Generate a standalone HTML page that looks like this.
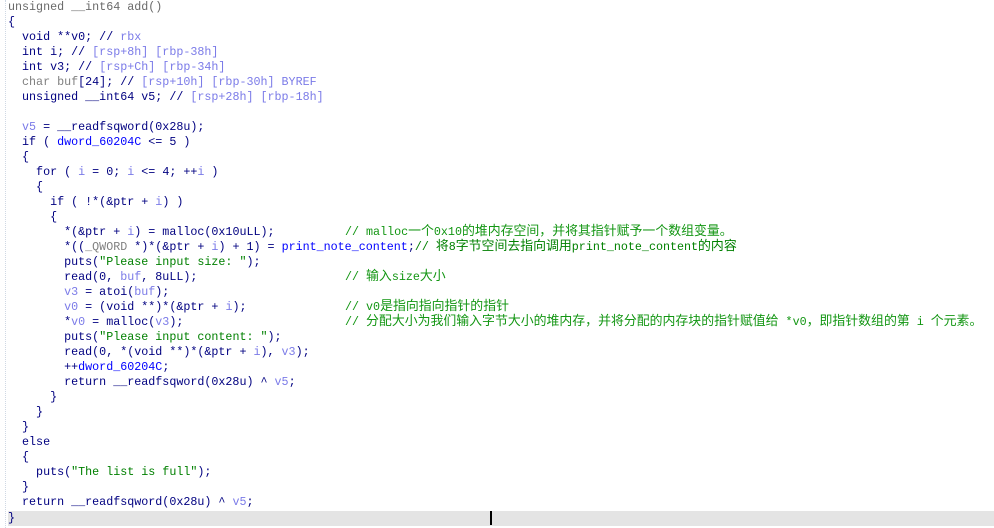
<!DOCTYPE html>
<html><head><meta charset="utf-8"><style>
body{margin:0;background:#fff;width:994px;height:528px;overflow:hidden;position:relative}
.g{position:absolute;left:0;top:0;width:5px;height:528px;border-right:1px dotted #cfd8e4}
.c{position:absolute;left:8px;top:0;font-family:"Liberation Mono","Noto Sans CJK SC",monospace;font-size:11.7px;color:#000080;}
.l{height:15px;line-height:15px;white-space:pre;position:relative}
.v{color:#7b7be8}.s{color:#008000}.b{color:#0000ff}.r{color:#808080}
.m{position:absolute;left:337px;top:0;color:#139613}
.k{font-family:"Noto Sans CJK SC",sans-serif;font-size:12.9px;line-height:0}
.hl{position:absolute;left:8px;top:511px;width:986px;height:15px;background:#e4e4e4}
.cur{position:absolute;left:490px;top:511px;width:2px;height:14px;background:#000}
</style></head><body>
<div class="g"></div>
<div class="hl"></div><div class="cur"></div>
<div class="c">
<div class="l" style="color:#6a6a6a">unsigned __int64 add()</div>
<div class="l">{</div>
<div class="l">  void **v0; // <span class="v">rbx</span></div>
<div class="l">  int i; // <span class="v">[rsp+8h] [rbp-38h]</span></div>
<div class="l">  int v3; // <span class="v">[rsp+Ch] [rbp-34h]</span></div>
<div class="l"><span class="r">  char buf</span>[24]; // <span class="v">[rsp+10h] [rbp-30h] BYREF</span></div>
<div class="l">  unsigned __int64 v5; // <span class="v">[rsp+28h] [rbp-18h]</span></div>
<div class="l"> </div>
<div class="l">  <span class="v">v5</span> = __readfsqword(0x28u);</div>
<div class="l">  if ( <span class="b">dword_60204C</span> &lt;= 5 )</div>
<div class="l">  {</div>
<div class="l">    for ( <span class="v">i</span> = 0; <span class="v">i</span> &lt;= 4; ++<span class="v">i</span> )</div>
<div class="l">    {</div>
<div class="l">      if ( !*(&amp;ptr + <span class="v">i</span>) )</div>
<div class="l">      {</div>
<div class="l">        *(&amp;ptr + <span class="v">i</span>) = malloc(0x10uLL);<span class="m">// malloc<span class="k">一个</span>0x10<span class="k">的堆内存空间，并将其指针赋予一个数组变量。</span></span></div>
<div class="l">        *((<span class="r">_QWORD</span> *)*(&amp;ptr + <span class="v">i</span>) + 1) = <span class="b">print_note_content</span>;<span class="s">// <span class="k">将</span>8<span class="k">字节空间去指向调用</span>print_note_content<span class="k">的内容</span></span></div>
<div class="l">        puts(<span class="s">"Please input size: "</span>);</div>
<div class="l">        read(0, <span class="v">buf</span>, 8uLL);<span class="m">// <span class="k">输入</span>size<span class="k">大小</span></span></div>
<div class="l">        <span class="v">v3</span> = atoi(<span class="v">buf</span>);</div>
<div class="l">        <span class="v">v0</span> = (void **)*(&amp;ptr + <span class="v">i</span>);<span class="m">// v0<span class="k">是指向指向指针的指针</span></span></div>
<div class="l">        *<span class="v">v0</span> = malloc(<span class="v">v3</span>);<span class="m">// <span class="k">分配大小为我们输入字节大小的堆内存，并将分配的内存块的指针赋值给</span> *v0<span class="k">，即指针数组的第</span> i <span class="k">个元素。</span></span></div>
<div class="l">        puts(<span class="s">"Please input content: "</span>);</div>
<div class="l">        read(0, *(void **)*(&amp;ptr + <span class="v">i</span>), <span class="v">v3</span>);</div>
<div class="l">        ++<span class="b">dword_60204C</span>;</div>
<div class="l">        return __readfsqword(0x28u) ^ <span class="v">v5</span>;</div>
<div class="l">      }</div>
<div class="l">    }</div>
<div class="l">  }</div>
<div class="l">  else</div>
<div class="l">  {</div>
<div class="l">    puts(<span class="s">"The list is full"</span>);</div>
<div class="l">  }</div>
<div class="l">  return __readfsqword(0x28u) ^ <span class="v">v5</span>;</div>
<div class="l" style="padding-top:1px">}</div>
</div>
</body></html>
